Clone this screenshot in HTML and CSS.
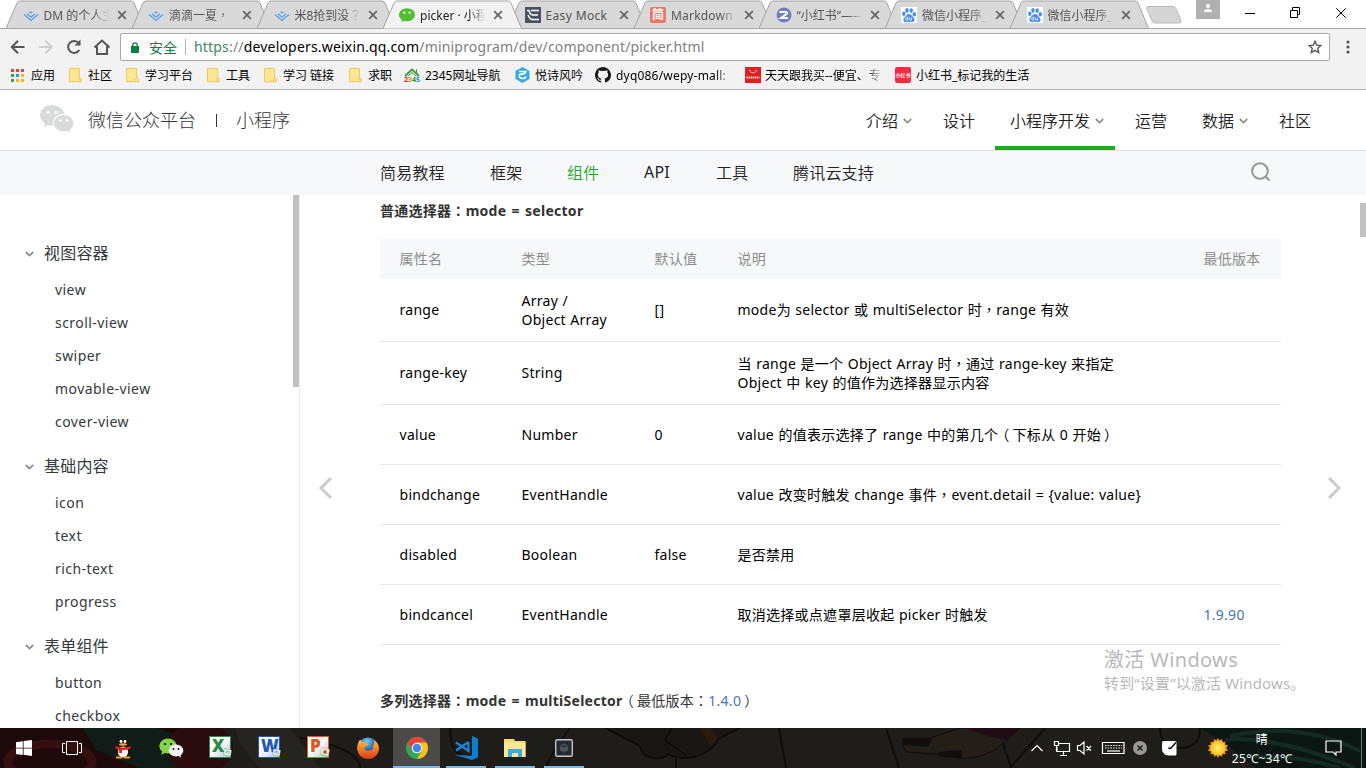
FILE: index.html
```html
<!DOCTYPE html>
<html lang="zh-CN">
<head>
<meta charset="utf-8">
<title>picker · 小程序</title>
<link rel="stylesheet" href="styles.css">
</head>
<body>
<svg class="defs" width="0" height="0">
  <defs>
    <radialGradient id="sun"><stop offset="0" stop-color="#ffef7a"/><stop offset="1" stop-color="#ffc21c"/></radialGradient>
    <radialGradient id="globe" cx=".45" cy=".2"><stop offset="0" stop-color="#6fd0f5"/><stop offset="1" stop-color="#14479b"/></radialGradient>
    <linearGradient id="fox" x1="0" y1="0" x2="0" y2="1"><stop offset="0" stop-color="#ffc23c"/><stop offset=".5" stop-color="#f37a1f"/><stop offset="1" stop-color="#da3a1c"/></linearGradient>
    <symbol id="tab" viewBox="0 0 139 28"><path d="M0 28L11 2.500Q12 .5 14 .5H125Q127 .5 128 2.500L138.500 28" stroke="#a3a3a3"/></symbol>
    <symbol id="close" viewBox="0 0 10 10"><path d="M1.200 1.200l7.600 7.600M8.800 1.200L1.200 8.800" stroke="#666" stroke-width="1.700"/></symbol>
    <symbol id="juejin" viewBox="0 0 16 16"><path d="M1 7.500l7 6 7-6M4 6.800L8 10.200l4-3.400M6.500 4.700L8 6l1.500-1.300" fill="none" stroke="#55a0ef" stroke-width="1.300"/></symbol>
    <symbol id="baidu" viewBox="0 0 16 16"><path fill="#fff" d="M0 0h16v16H0z"/><g fill="#4a8df5"><ellipse cx="2.800" cy="6.800" rx="1.700" ry="2.200"/><ellipse cx="6" cy="3.500" rx="1.700" ry="2.400"/><ellipse cx="10.200" cy="3.600" rx="1.700" ry="2.400"/><ellipse cx="13.300" cy="7.200" rx="1.700" ry="2.200"/><path d="M8 6.700c2 0 2.800 2.400 4.500 3.800 2 1.800 1 4.500-1 4.600-1.500 0-2-.3-3.500-.3s-2 .4-3.500.3c-2.300-.2-2.900-3-1-4.600C5.200 9.100 6 6.700 8 6.700z"/></g><path d="M6.700 9.500v3.600H5.500q-1-.2-1-1.200t1-1.200h1M8.500 10.600v2q.3.600 1.200.6h.8v-2.600" fill="none" stroke="#fff" stroke-width=".8"/></symbol>
    <symbol id="folder" viewBox="0 0 13 15"><path d="M.5.5h10v9.800h1.800v3.500H.5z" fill="#ffe694" stroke="#eec95c"/><path d="M9.500 14V10.500h1.500" fill="none" stroke="#eec95c"/></symbol>
    <symbol id="chev" viewBox="0 0 9 6"><path d="M.8 1l3.700 3.600L8.200 1" fill="none" stroke="#8f8f8f" stroke-width="1.800"/></symbol>
  </defs>
</svg>
<div class="screen">
  <div class="tabstrip">
    <div class="tab"><svg class="shape"><use href="#tab"/></svg><svg class="fav"><use href="#juejin"/></svg><span>DM 的个人主</span><svg class="x"><use href="#close"/></svg></div>
    <div class="tab"><svg class="shape"><use href="#tab"/></svg><svg class="fav"><use href="#juejin"/></svg><span>滴滴一夏<q lang="zh-TW">，</q></span><svg class="x"><use href="#close"/></svg></div>
    <div class="tab"><svg class="shape"><use href="#tab"/></svg><svg class="fav"><use href="#juejin"/></svg><span>米8抢到没<q lang="zh-TW">？</q></span><svg class="x"><use href="#close"/></svg></div>
    <div class="tab active"><svg class="shape"><use href="#tab"/></svg><svg class="fav" viewBox="0 0 16 16"><path d="M8 1.200c4.500 0 8 2.900 8 6.500s-3.500 6.500-8 6.500q-1.600 0-3-.5L2.300 15.200l.6-2.500C1.100 11.500 0 9.700 0 7.700c0-3.600 3.500-6.500 8-6.500z" fill="#4fc130"/><circle cx="5.300" cy="5.700" r="1.100" fill="#fff"/><circle cx="10.600" cy="5.700" r="1.100" fill="#fff"/></svg><span>picker · 小程</span><svg class="x"><use href="#close"/></svg></div>
    <div class="tab"><svg class="shape"><use href="#tab"/></svg><svg class="fav" viewBox="0 0 16 16"><path fill="#48535f" d="M0 0h16v16H0z"/><path d="M6 3.500h8M7 8h6M6 12.500h8M2 3.500h2q1 4.500 4 4.500M3 8q2 4.500 4 4.500" fill="none" stroke="#fff" stroke-width="1.400"/></svg><span class="solid">Easy Mock</span><svg class="x"><use href="#close"/></svg></div>
    <div class="tab"><svg class="shape"><use href="#tab"/></svg><b class="fav jian">简</b><span class="wide">Markdown</span><svg class="x"><use href="#close"/></svg></div>
    <div class="tab"><svg class="shape"><use href="#tab"/></svg><svg class="fav" viewBox="0 0 16 16"><circle cx="8" cy="8" r="7.500" fill="#6e7fb9"/><path d="M3.500 5h6.500q2 .3.500 2L5 11h7" fill="none" stroke="#fff" stroke-width="2"/></svg><span>“小红书”——</span><svg class="x"><use href="#close"/></svg></div>
    <div class="tab"><svg class="shape"><use href="#tab"/></svg><svg class="fav"><use href="#baidu"/></svg><span>微信小程序_</span><svg class="x"><use href="#close"/></svg></div>
    <div class="tab"><svg class="shape"><use href="#tab"/></svg><svg class="fav"><use href="#baidu"/></svg><span>微信小程序_</span><svg class="x"><use href="#close"/></svg></div>
    <svg class="newtab" width="36" height="18" viewBox="0 0 36 18"><path d="M2 .5h25q2 0 3 2l5 12q.5 2.500-1.500 2.500H8.500q-1.500 0-2.500-2L.7 2.500Q.5.500 2 .5z" fill="#d5d5d5" stroke="#b9b9b9"/></svg>
    <div class="winctl">
      <svg width="24" height="19" viewBox="0 0 24 19"><path fill="#b0b0b0" d="M0 0h24v19H0z"/><circle cx="12" cy="6" r="2" fill="#fff"/><path d="M8 12V11q1-2 4-2t4 2v1z" fill="#fff"/></svg>
      <svg width="102" height="12" viewBox="0 0 102 12" fill="none" stroke="#000"><path d="M0 6.500h10M45.500 3.500h7v7h-7zM47.500 3v-2.500h7v7H53M91.300 1.300l9.400 9.400M100.700 1.300l-9.400 9.400"/></svg>
    </div>
  </div>
  <div class="toolbar">
    <svg class="nav" width="102" height="18" viewBox="0 0 102 18" fill="none" stroke="#555" stroke-width="2"><path d="M14.500 9H2M8 2.800L1.800 9 8 15.200"/><path d="M29 9h12.500M35.500 2.800L41.700 9l-6.200 6.200" stroke="#cfcfcf"/><path d="M69.300 12A6 6 0 1 1 68.700 5"/><path d="M70.500 1.500V7.500H64.500z" fill="#555" stroke="none"/><path d="M84.500 9.500L92 2.500l7.500 7M87 8.500V16h10V8.500"/></svg>
    <div class="omni">
      <svg width="8" height="11" viewBox="0 0 8 11"><path d="M0 4h8v7H0z" fill="#0b8043"/><path d="M1.800 4.500V3a2.200 2.200 0 0 1 4.400 0v1.500" fill="none" stroke="#0b8043" stroke-width="1.300"/></svg>
      <span class="safe">安全</span><i></i>
      <span class="url"><em>https</em>://<strong>developers.weixin.qq.com</strong>/miniprogram/dev/component/picker.html</span>
      <svg class="star" width="14" height="14" viewBox="0 0 14 14"><path d="M7 1.300l1.700 3.800 4.300.4-3.200 2.800.9 4.200L7 10.300l-3.700 2.200.9-4.200L1 5.500l4.300-.4z" fill="none" stroke="#555" stroke-width="1.400"/></svg>
    </div>
    <svg width="4" height="14" viewBox="0 0 4 14" fill="#555"><circle cx="2" cy="2" r="1.600"/><circle cx="2" cy="7" r="1.600"/><circle cx="2" cy="12" r="1.600"/></svg>
  </div>
  <div class="bookmarks">
    <div><svg width="13" height="13" viewBox="0 0 13 13"><path fill="#ea4335" d="M0 0h3v3H0zM5 0h3v3H5zM10 0h3v3h-3z"/><path fill="#34a05a" d="M0 5h3v3H0zM0 10h3v3H0z"/><path fill="#4285f4" d="M5 5h3v3H5z"/><path fill="#fbb400" d="M10 5h3v3h-3zM5 10h3v3H5zM10 10h3v3h-3z"/></svg><span class="t7">应用</span></div>
    <div><svg class="fold"><use href="#folder"/></svg><span>社区</span></div>
    <div><svg class="fold"><use href="#folder"/></svg><span>学习平台</span></div>
    <div><svg class="fold"><use href="#folder"/></svg><span>工具</span></div>
    <div><svg class="fold"><use href="#folder"/></svg><span>学习 链接</span></div>
    <div><svg class="fold"><use href="#folder"/></svg><span>求职</span></div>
    <div><span class="hao"><svg width="16" height="9" viewBox="0 0 16 9"><path d="M1 8l7-6.500L15 8" fill="none" stroke="#3a9d3a" stroke-width="1.800"/><path d="M3.500 8.500L8 4.500l4.500 4M12.500 1.500V5" fill="none" stroke="#3a9d3a"/></svg><b><i>2</i><u>3</u><s>4</s>5</b></span><span class="t5">2345网址导航</span></div>
    <div><svg width="15" height="16" viewBox="0 0 15 16"><path d="M7.500 0L14.500 4v8L7.500 16 .5 12V4z" fill="#36a9e1"/><path d="M4 4.500h7Q10.500 7 4.500 7.500v2.500q.5 1.500 3 1.500 3 0 3.500-2" fill="none" stroke="#fff" stroke-width="1.500"/></svg><span class="t5">悦诗风吟</span></div>
    <div><svg width="16" height="16" viewBox="0 0 16 16"><path d="M8 0C3.600 0 0 3.600 0 8c0 3.500 2.300 6.500 5.500 7.600.4.100.5-.2.500-.4v-1.500c-2.200.5-2.700-.9-2.700-.9-.4-.9-.9-1.200-.9-1.200-.7-.5.100-.5.100-.5.800.1 1.200.8 1.200.8.700 1.200 1.900.9 2.300.7.100-.5.300-.9.500-1.100-1.800-.2-3.600-.9-3.600-4 0-.9.300-1.600.8-2.100-.1-.2-.4-1 .1-2.100 0 0 .7-.2 2.200.8a7.700 7.700 0 0 1 4 0c1.500-1 2.200-.8 2.200-.8.400 1.100.2 1.900.1 2.100.5.600.8 1.300.8 2.100 0 3.100-1.900 3.800-3.700 4 .3.300.6.800.6 1.500v2.200c0 .2.100.5.500.4A8 8 0 0 0 8 0z" fill="#191717"/></svg><span class="t5 fade git">dyq086/wepy-mall:</span></div>
    <div><svg width="16" height="16" viewBox="0 0 16 16"><path fill="#e02020" d="M0 0h16v16H0z"/><path d="M4.500 2.500q.5 3.500 3.500 3.500t3.500-3.500" fill="none" stroke="#ffb0b0"/><path d="M1.500 10.500h13" fill="none" stroke="#ffd5d5" stroke-width="2" stroke-dasharray="1.500 .6"/></svg><span class="fade">天天跟我买--便宜、专</span></div>
    <div><b class="red">小红书</b><span class="t5">小红书_标记我的生活</span></div>
  </div>
  <header class="sitehead">
    <svg class="logo" width="34" height="29" viewBox="0 0 34 29" fill="#d8dbd9"><path d="M12 0c6 0 11 3.700 12.300 8.700C18 8.500 13 12.500 13 17.500q0 1.600.5 3-3.500.5-6-.5L4 22.200 5 18.500C2 16.500 0 13.700 0 10.500 0 4.700 5.400 0 12 0z"/><path d="M23.800 10C29 10 33.500 13.700 33.500 18.200c0 2.700-1.500 4.900-3.800 6.500l.7 3-3-1.700q-1.600.5-3.600.5C18.300 26.500 14 22.700 14 18.200S18.300 10 23.800 10z"/><g fill="#fff"><circle cx="8" cy="7.300" r="1.600"/><circle cx="16" cy="7.300" r="1.600"/><circle cx="20.500" cy="15.500" r="1.300"/><circle cx="27" cy="15.500" r="1.300"/></g></svg>
    <span class="brand">微信公众平台</span><i></i><span class="brand">小程序</span>
    <nav>
      <a>介绍<svg class="chev"><use href="#chev"/></svg></a><a>设计</a><a class="on">小程序开发<svg class="chev"><use href="#chev"/></svg></a><a>运营</a><a>数据<svg class="chev"><use href="#chev"/></svg></a><a>社区</a>
    </nav>
  </header>
  <div class="subnav"><a>简易教程</a><a>框架</a><a class="on">组件</a><a class="latin">API</a><a>工具</a><a>腾讯云支持</a>
    <svg width="20" height="20" viewBox="0 0 20 20" fill="none" stroke="#979797" stroke-width="2"><circle cx="9" cy="9" r="7.800"/><path d="M14.500 14.500l4 4"/></svg>
  </div>
  <div class="main">
    <aside>
      <h3><svg class="chev"><use href="#chev"/></svg>视图容器</h3>
      <a>view</a><a>scroll-view</a><a>swiper</a><a>movable-view</a><a>cover-view</a>
      <h3><svg class="chev"><use href="#chev"/></svg>基础内容</h3>
      <a>icon</a><a>text</a><a>rich-text</a><a>progress</a>
      <h3><svg class="chev"><use href="#chev"/></svg>表单组件</h3>
      <a>button</a><a>checkbox</a>
      <div class="thumb"></div>
    </aside>
    <svg class="arrow" width="15" height="24" viewBox="0 0 15 24"><path d="M13 2L3 12l10 10" fill="none" stroke="#ccc" stroke-width="3"/></svg>
    <article>
      <h4>普通选择器<q lang="zh-TW">：</q>mode = selector</h4>
      <div class="row head"><span>属性名</span><span>类型</span><span>默认值</span><span>说明</span><span>最低版本</span></div>
      <div class="row tall"><span>range</span><span>Array /<br>Object Array</span><span>[]</span><span>mode为 selector 或 multiSelector 时<q lang="zh-TW">，</q>range 有效</span><span></span></div>
      <div class="row tall"><span>range-key</span><span>String</span><span></span><span>当 range 是一个 Object Array 时<q lang="zh-TW">，</q>通过 range-key 来指定<br>Object 中 key 的值作为选择器显示内容</span><span></span></div>
      <div class="row"><span>value</span><span>Number</span><span>0</span><span>value 的值表示选择了 range 中的第几个<q class="open">（</q>下标从 0 开始<q class="shut">）</q></span><span></span></div>
      <div class="row"><span>bindchange</span><span>EventHandle</span><span></span><span>value 改变时触发 change 事件<q lang="zh-TW">，</q>event.detail = {value: value}</span><span></span></div>
      <div class="row"><span>disabled</span><span>Boolean</span><span>false</span><span>是否禁用</span><span></span></div>
      <div class="row"><span>bindcancel</span><span>EventHandle</span><span></span><span>取消选择或点遮罩层收起 picker 时触发</span><span class="link">1.9.90</span></div>
      <h4 class="second">多列选择器<q lang="zh-TW">：</q>mode = multiSelector<small><q class="open">（</q>最低版本<q lang="zh-TW">：</q><span class="link">1.4.0</span><q class="shut">）</q></small></h4>
    </article>
    <svg class="arrow right" width="15" height="24" viewBox="0 0 15 24"><path d="M2 2l10 10L2 22" fill="none" stroke="#ccc" stroke-width="3"/></svg>
    <div class="pagethumb"></div>
    <div class="activate"><p>激活 Windows</p><span>转到“设置”以激活 Windows。</span></div>
  </div>
  <footer>
    <svg class="wall" width="1366" height="40" viewBox="0 0 1366 40"><path fill="#1f1d19" d="M0 0h1366v40H0z"/><path fill="#1e090a" d="M0 0h215v40H0z"/><path fill="#101c17" d="M82 0h75l45 16 8 24h-70L96 22z"/><ellipse cx="50" cy="34" rx="42" ry="18" fill="none" stroke="#35100f" stroke-width="9"/><ellipse cx="200" cy="20" rx="33" ry="26" fill="#2b0d0f"/><path d="M235 0q4 20 25 40h60L290 0z" fill="#262420"/><path d="M300 10q60 10 60 30M450 0q0 30 20 28M570 0q-15 20-25 40M779 0l7 40M886 0l13 40M1003 15l8 25M676 30v10M1045 0l-35 40M1160 0q0 20 20 20t20-20" fill="none" stroke="#100e0d" stroke-width="2"/><path d="M605 0l35 18q2 10 12 12 12 2 16-4 12 6 26 3 20-6 24-18l22-11M672 0l-7 12 22 16" fill="#191614" stroke="#0d0b0a" stroke-width="1.500"/><path fill="#2a1b0f" d="M700 0h10l8 10-8 8z"/><path d="M902 16l28-6 30-10h60l-25 22q-20 10-35 8l-24-4-30-2z" fill="#231f18" stroke="#0f0d0b"/><path fill="#100f0e" d="M902 10l30 0-4 9-26-2zM938 24l24-2v8l-22-1z"/><path fill="#200c13" d="M965 0h55l-14 12-18-4z"/><path fill="#0c1714" d="M1200 0h166v40h-110L1225 15z"/><path d="M1225 12q50-5 130 28M1230 8q70-15 130 15M1240 30q50-5 100 10" fill="none" stroke="#142b23" stroke-width="4"/></svg>
    <div class="apps">
      <div><svg class="win" width="16" height="16" viewBox="0 0 16 16"><path fill="#fff" d="M0 2.200L6.800 1.200v6.500H0zM7.600 1.100L16 0v7.700H7.600zM0 8.500h6.800V15L0 14zM7.600 8.500H16V16l-8.400-1.200z"/></svg></div>
      <div><svg class="tv" width="20" height="14" viewBox="0 0 20 14" fill="none" stroke="#fff"><path d="M4.500.5h11v13h-11zM3 2.500H.5v9H3M17 2.500h2.500v9H17"/></svg></div>
      <div><svg width="18" height="21" viewBox="0 0 18 21"><ellipse cx="9" cy="6" rx="5" ry="6" fill="#171717"/><ellipse cx="9" cy="13" rx="7" ry="7" fill="#171717"/><ellipse cx="9" cy="14" rx="5" ry="5.500" fill="#fff"/><circle cx="7" cy="3.500" r="1.400" fill="#fff"/><circle cx="11" cy="3.500" r="1.400" fill="#fff"/><ellipse cx="9" cy="6.500" rx="4" ry="1.200" fill="#f7a818"/><path d="M1.500 8q7.500 3 15 0v2.500q-4 2-8.500 1.500v3H5v-3.500L1.500 10.500z" fill="#e2231a"/><path d="M2 18.500h6v2H2zM10 18.500h6v2h-6z" fill="#f6a01a"/></svg></div>
      <div><svg width="25" height="20" viewBox="0 0 25 20"><ellipse cx="9" cy="8" rx="8.700" ry="7.500" fill="#83d64b"/><path d="M3 13l-.5 4L7 14z" fill="#83d64b"/><ellipse cx="17" cy="12.500" rx="7.300" ry="6" fill="#f3f3f3"/><path d="M18 17l4 2.500L21.500 16z" fill="#f3f3f3"/><circle cx="6" cy="6" r="1.100"/><circle cx="12" cy="6" r="1.100"/><circle cx="14.500" cy="11" r=".9"/><circle cx="19.500" cy="11" r=".9"/></svg></div>
      <div class="office xl"><b>X<svg width="9" height="9" viewBox="0 0 12 11"><path d="M2 .5l9.500 2L10 10.500 .5 8z" fill="#fff" stroke="currentColor" stroke-width=".5"/><path d="M3 3.500l6.500 1.500M2.500 5.500L9 7" stroke="currentColor" stroke-width=".8"/></svg></b></div>
      <div class="office wd"><b>W<svg width="9" height="9" viewBox="0 0 12 11"><path d="M2 .5l9.500 2L10 10.500 .5 8z" fill="#fff" stroke="currentColor" stroke-width=".5"/><path d="M3 3.500l6.500 1.500M2.500 5.500L9 7" stroke="currentColor" stroke-width=".8"/></svg></b></div>
      <div class="office pp"><b>P<svg width="10" height="10" viewBox="0 0 12 11"><path d="M2 .5l9.500 2L10 10.500 .5 8z" fill="#fff" stroke="currentColor" stroke-width=".5"/><circle cx="6" cy="5.500" r="2.500" fill="currentColor"/></svg></b></div>
      <div><svg width="22" height="22" viewBox="0 0 22 22"><circle cx="11" cy="11" r="10.500" fill="url(#globe)"/><path d="M1.500 5Q3 2.500 3.500 2.800L5 5q3-.5 4 1.500 2 0 2.500 1L9 9.500q-2 .5-1.500 2.500 2.500 3 6 1 3 0 2.500-4 2-3 1-6Q23 7 21.800 13.500 19.500 22 11 22 1.500 21.500.2 12.500 0 8 1.500 5z" fill="url(#fox)"/></svg></div>
      <div class="run now"><svg width="22" height="22" viewBox="0 0 22 22"><circle cx="11" cy="11" r="11" fill="#34a853"/><path d="M1.500 5.500A11 11 0 0 1 20.500 5.500H11L6.200 13.700z" fill="#ea4335"/><path d="M20.500 5.500A11 11 0 0 1 11 22L15.800 13.700 11 5.500z" fill="#fbc116"/><circle cx="11" cy="11" r="5.300" fill="#fff"/><circle cx="11" cy="11" r="4.300" fill="#4285f4"/></svg></div>
      <div class="run"><svg width="24" height="24" viewBox="0 0 24 24"><path d="M18 0l6 2.500v19L18 24 .5 18.700l17.500 1z" fill="#0c7fd4"/><path d="M14.500 6v9L2 6.500M2 14.500L14.500 6" fill="none" stroke="#1689db" stroke-width="2.200"/></svg></div>
      <div class="run"><svg width="22" height="18" viewBox="0 0 22 18"><path d="M0 0h10l1 2h10.500v16H0z" fill="#f8d775"/><path d="M0 3.500h21.500V18H0z" fill="#ffe79a"/><path d="M4 18v-8h14v8h-4v-4H8v4z" fill="#37aee3"/></svg></div>
      <div class="run"><svg width="18" height="18" viewBox="0 0 18 18"><rect x=".7" y=".7" width="16.600" height="16.600" rx="1.500" fill="#252a33" stroke="#c3c7cd" stroke-width="1.400"/><path d="M9 4.500l4 2v5l-4 2-4-2v-5zM5 6.500l4 2 4-2M9 8.500v5" fill="#555a62" stroke="#30353e" stroke-width=".7"/></svg></div>
    </div>
    <div class="tray">
      <svg width="146" height="18" viewBox="0 0 146 18" fill="none" stroke="#fff" stroke-width="1.200"><path d="M.5 12L6 6.500l5.500 5.500"/><path d="M28 4.500h10.500v8H26V8M23.500 2.500h4v4h-4zM25.500 6.500v6M29 16.500h7M32.500 12.500v4"/><path d="M46.500 6.500H49l4-3.500v12l-4-3.500h-2.500zM55.500 7l4.500 4.500M60 7l-4.500 4.500"/><path d="M71.500 3.500h21.500v11H71.500z"/><path d="M74 6.500h17M74 9h17" stroke-dasharray="1.500 1.200"/><path d="M76 12h13"/><circle cx="109" cy="9" r="7" fill="#999" stroke="none"/><path d="M106.500 6.500l5 5M111.500 6.500l-5 5" stroke="#222" stroke-width="1.700"/><rect x="131" y="2" width="14.500" height="14.500" rx="1.500" fill="#fff" stroke="none"/><path d="M130.500 10.500l6.500 6.500h-6.500z" fill="#1f1d19" stroke="none"/><path d="M131.500 12l4 4"/><path d="M137.500 8.500q1.500 2 3 0l4.500-5" stroke="#111" stroke-width="1.500"/></svg>
      <svg class="sunny" width="20" height="20" viewBox="0 0 20 20"><path d="M10 0l1.500 2.500L14 1l.5 3 3-.5-.5 3 3 .8L18.300 10l1.700 2.500-3 .8.500 3-3-.5-.5 3-2.500-1.500L10 20l-1.500-2.700L6 19l-.5-3-3 .5.500-3-3-.8L1.700 10 0 7.500l3-.8-.5-3 3 .5L6 1l2.500 1.500z" fill="#f4901d"/><circle cx="10" cy="10" r="7.300" fill="url(#sun)"/></svg>
      <div class="weather"><span>晴</span><span>25℃~34℃</span></div>
      <svg width="17" height="16" viewBox="0 0 17 16" fill="none" stroke="#fff" stroke-width="1.200"><path d="M1 1h15v11h-5V15l-3-3H1z"/></svg>
      <i></i>
    </div>
  </footer>
</div>
</body>
</html>
```
FILE: styles.css
```css
* { box-sizing: border-box; }
body { margin: 0; }
body, .screen { font-family: "Noto Sans", "Noto Sans CJK SC", sans-serif; }
.defs { position: absolute; }
.screen { width: 1366px; height: 768px; overflow: hidden; background: #fff; color: #000; white-space: nowrap; }
.screen svg { flex: none; display: block; }
i, em { font-style: normal; }

/* full-width punctuation is centred in its em box */
q { font-family: "Noto Sans CJK TC", sans-serif; quotes: none; line-height: 1; }
q.open { margin: 0 3px 0 -3px; }
q.shut { margin-left: 3px; }

.tabstrip { display: flex; height: 28px; padding-left: 6px; }
.tab { position: relative; z-index: 0; flex: none; width: 139px; height: 28px; margin-right: -13.500px; display: flex; align-items: center; padding: 2px 0 0 16.500px; font-size: 12px; color: #555; }
.tab .shape { position: absolute; left: 0; top: 0; width: 139px; height: 29px; z-index: -1; fill: #d9d9d9; }
.tab.active { z-index: 2; color: #222; }
.tab.active .shape { fill: #f2f2f2; }
.tab .fav { width: 16px; height: 16px; flex: none; }
.tab span { width: 68px; margin: 0 5px 0 5px; overflow: hidden; -webkit-mask-image: linear-gradient(90deg, #000 73%, transparent 96%); }
.tab .solid { -webkit-mask-image: none; letter-spacing: .35px; }
.tab .wide { letter-spacing: .2px; }
.tab .x { width: 10px; height: 10px; }
.jian { background: #ed7763; color: #fff; font-size: 12px; line-height: 16px; text-align: center; border-radius: 2px; }
.newtab { margin: 6px 0 0 10px; }
.winctl { display: flex; margin-left: 14px; }
.winctl svg + svg { margin: 7px 0 0 25px; }

.toolbar { position: relative; height: 33px; background: #f2f2f2; border-top: 1px solid #a8a8a8; display: flex; align-items: flex-end; padding-left: 10px; }
.nav { margin-bottom: 5px; }
.omni { width: 1210px; height: 28px; margin: 0 16px 0 8px; background: #fff; border: 1px solid #a8a8a8; border-radius: 2px; display: flex; align-items: center; padding-left: 10px; font-size: 14px; }
.safe { margin: -1px 0 0 10px; color: #0b8043; }
.omni i { width: 1px; height: 16px; background: #b5b5b5; margin: 0 8px; }
.url { color: #808080; flex: 1; letter-spacing: .18px; margin-top: -2px; }
.url em { color: #3b8a63; }
.url strong { font-weight: 400; color: #000; }
.star { margin-right: 7px; }
.toolbar > svg:last-child { margin-bottom: 7px; }

.bookmarks { height: 29px; background: #f2f2f2; border-bottom: 1px solid #b0b0b0; display: grid; grid-template-columns: 58px 57px 81px 57px 85px 55px 111px 80px 150px 150px 200px; padding-left: 11px; font-size: 12px; }
.bookmarks > div { display: flex; align-items: center; height: 28px; }
.bookmarks span { margin-left: 6px; }
.fold { width: 13px; height: 15px; }
.bookmarks .t7 { margin-left: 7px; }
.bookmarks .t5 { margin-left: 5px; }
.bookmarks .fade { width: 120px; margin-left: 4px; overflow: hidden; -webkit-mask-image: linear-gradient(90deg, #000 82%, transparent 99%); }
.bookmarks .git { letter-spacing: .2px; margin-left: 5px; }
.bookmarks .hao { margin: 0; width: 16px; }
.hao b { display: block; font-size: 7px; line-height: 6px; color: #2a8ae0; }
.hao i { color: #e22; }
.hao u { color: #e80; text-decoration: none; }
.hao s { color: #292; text-decoration: none; }
.red { width: 16px; height: 16px; background: #ff2741; color: #fff; border-radius: 2px; font-size: 5px; line-height: 16px; text-align: center; }

.sitehead { height: 61px; border-bottom: 1px solid #dfe1e2; display: flex; align-items: center; padding-left: 40px; color: #353535; }
.brand { font-size: 18px; font-weight: 300; font-family: "Noto Sans CJK SC", sans-serif; margin-top: -3px; }
.logo { margin: -2px 14px 0 0; }
.sitehead i { width: 1px; height: 13px; background: #353535; margin: 0 19px 0 20px; }
.sitehead nav { display: grid; grid-template-columns: 77px 67px 125px 67px 77px 60px; margin-left: 561px; height: 60px; font-size: 16px; font-weight: 350; color: #222; }
.sitehead a { display: flex; align-items: center; padding: 0 0 1px 15px; }
.sitehead .on { width: 120px; border-bottom: 4px solid #1aad19; padding-top: 3px; padding-bottom: 0; }
.chev { width: 9px; height: 6px; margin-left: 5px; }
.sitehead .chev { margin-top: 3px; }
.subnav { height: 44px; background: #f6f8fa; display: grid; grid-template-columns: 110px 77px 77px 72px 77px 458px 20px; align-items: center; padding: 0 0 2px 380px; font-size: 16px; font-weight: 350; letter-spacing: .2px; color: #222; }
.subnav .on { color: #1aad19; }
.subnav .latin { font-weight: 400; }
.subnav svg { margin: -1px 0 0 0; }

.main { position: relative; height: 533px; display: flex; overflow: hidden; }
aside { position: relative; width: 300px; border-right: 1px solid #eaeaea; padding-top: 43px; color: #34393d; letter-spacing: .45px; flex: none; }
aside h3 { margin: 0 0 3px; height: 33px; display: flex; align-items: center; font-size: 16px; font-weight: 400; letter-spacing: .2px; padding-bottom: 5px; }
aside h3 .chev { margin: 4px 10px 0 25px; }
aside a { display: block; height: 33px; line-height: 32px; font-size: 14px; padding-left: 55px; }
aside a + h3 { margin-top: 12px; }
.thumb { position: absolute; right: 0; top: 0; width: 6px; height: 192px; background: #c1c1c1; }
.arrow { margin: 281px 0 0 18px; }
article { width: 901px; margin-left: 47px; font-size: 14px; letter-spacing: .27px; word-spacing: .5px; flex: none; }
h4 { margin: 0; height: 44px; padding-top: 6px; line-height: 20px; font-size: 14px; color: #333; word-spacing: 1.300px; }
.row { display: grid; grid-template-columns: 122px 133px 83px 466px auto; align-items: center; height: 60px; padding-left: 19.500px; border-bottom: 1px solid #e6e6e6; line-height: 19px; }
.row.tall { height: 63px; padding-bottom: 1px; }
.row.head { height: 40px; background: #f6f8fa; border: 0; color: #8d8d8d; padding-bottom: 2px; letter-spacing: .2px; }
.link { color: #4a76ab; }
.second { padding-top: 46px; height: 80px; }
.second small { font-size: 14px; font-weight: 400; }
.arrow.right { margin-left: 46px; }
.pagethumb { position: absolute; right: 0; top: 8px; width: 6px; height: 34px; background: #c1c1c1; }
.activate { position: absolute; left: 1104px; top: 451px; color: #b8b8b8; font-size: 15px; line-height: 19px; letter-spacing: .15px; }
.activate p { margin: 0; font-size: 20px; line-height: 28px; letter-spacing: .35px; }

footer { position: relative; z-index: 0; height: 40px; display: flex; color: #fff; overflow: hidden; }
.wall { position: absolute; left: 0; top: 0; z-index: -1; }
.apps { display: flex; }
.apps > div { width: 49px; height: 40px; display: flex; align-items: center; justify-content: center; }
.apps .tv { margin-right: 3px; }
.apps .win { margin-right: 2px; }
.apps .run { width: 40px; margin: 0 4.500px; border-bottom: 2px solid #76b9ed; padding-top: 2px; }
.apps .now { width: 47px; margin: 0 1px; background: #4b4a48; }
.office { padding-bottom: 2px; }
.office b { position: relative; width: 22px; height: 22px; margin-right: 1px; background: linear-gradient(135deg, #fff 45%, #a9bfd4); border: 1px solid; font: 900 17px/18px "Open Sans", sans-serif; padding-left: 2px; }
.office svg { position: absolute; right: -2px; bottom: 0; }
.office.xl { color: #2c8a42; }
.office.wd { color: #2159b4; }
.office.pp { color: #dd5a26; }
.tray { display: flex; align-items: center; margin-left: 443px; }
.sunny { margin: 0 3px 0 31px; }
.weather { width: 62px; font-size: 12px; text-align: center; line-height: 19px; margin-right: 32px; padding-top: 1px; letter-spacing: .3px; }
.weather span { display: block; }
.tray i { width: 1px; height: 40px; background: #777; margin-left: 19px; }
```
